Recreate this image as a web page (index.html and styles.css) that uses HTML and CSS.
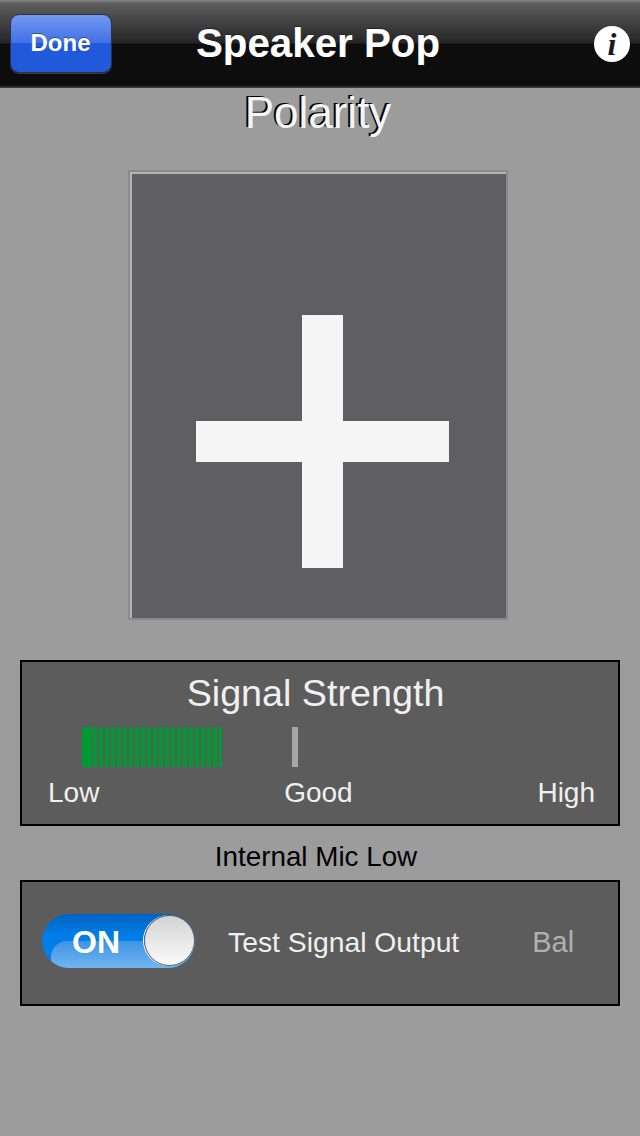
FILE: index.html
```html
<!DOCTYPE html>
<html lang="en">
<head>
    <meta charset="UTF-8">
    <meta name="viewport" content="width=device-width, initial-scale=1.0">
    <title>Speaker Pop</title>
    <link rel="stylesheet" href="styles.css">
</head>
<body>
    <header class="navbar">
        <button class="done-button">Done</button>
        <h1 class="navbar-title">Speaker Pop</h1>
        <span class="info-icon">i</span>
    </header>

    <h2 class="polarity-title">Polarity</h2>

    <div class="polarity-box">
        <div class="plus-sign"></div>
    </div>

    <section class="panel signal-panel">
        <h3 class="signal-title">Signal Strength</h3>
        <div class="meter">
            <div class="meter-first"></div>
            <div class="meter-bars"></div>
            <div class="meter-mark"></div>
        </div>
        <div class="meter-labels">
            <span>Low</span>
            <span>Good</span>
            <span>High</span>
        </div>
    </section>

    <p class="mic-status">Internal Mic Low</p>

    <section class="panel output-panel">
        <div class="switch">
            <span class="switch-label">ON</span>
            <span class="switch-knob"></span>
        </div>
        <span class="output-label">Test Signal Output</span>
        <span class="output-mode">Bal</span>
    </section>
</body>
</html>
```

FILE: styles.css
```css
body {
    margin: 0;
    height: 1136px;
    overflow: hidden;
    background-color: #9c9c9c;
    font-family: "Liberation Sans", Arial, sans-serif;
}

.navbar {
    height: 88px;
    display: grid;
    grid-template-columns: 1fr auto 1fr;
    align-items: center;
    padding: 0 10px;
    box-sizing: border-box;
    background: linear-gradient(#8a8a8a 0, #5e5e5e 3px, #252525 43px, #0d0d0d 44px, #0d0d0d 85px, #444 88px);
}
.done-button {
    width: 102px;
    height: 59px;
    margin-top: -2px;
    padding: 0 1px 0 0;
    border: 1px solid #2b3140;
    border-radius: 9px;
    background: linear-gradient(#7499f2 0, #3f6fe6 50%, #2159dc 50%, #2159da 100%);
    box-shadow: 0 1px 0 rgba(255, 255, 255, 0.2);
    color: white;
    font-family: inherit;
    font-size: 24px;
    font-weight: bold;
    text-shadow: 0 -1px 0 rgba(0, 0, 0, 0.4);
}
.navbar-title {
    margin: 0 0 0 -4px;
    color: white;
    font-size: 40.3px;
    font-weight: bold;
    text-shadow: 0 -1px 0 #222;
}
.info-icon {
    justify-self: end;
    width: 36px;
    height: 36px;
    border-radius: 50%;
    background-color: white;
    color: #1a1a1a;
    font-family: "Liberation Serif", serif;
    font-size: 32px;
    font-style: italic;
    font-weight: bold;
    line-height: 36px;
    text-align: center;
}

.polarity-title {
    margin: 0;
    height: 82px;
    padding-right: 4px;
    color: #f5f5f5;
    font-size: 44px;
    font-weight: normal;
    line-height: 50px;
    text-align: center;
    text-shadow: -2px -1px 0 #000;
}

.polarity-box {
    width: 380px;
    height: 450px;
    margin-left: 128px;
    box-sizing: border-box;
    padding: 143px 0 0 66px;
    border: 2px solid #8a8a8a;
    box-shadow: inset 2px 2px 0 #b4b4b4;
    background-color: #5f5f61;
}
.plus-sign {
    width: 253px;
    height: 253px;
    background:
        linear-gradient(#f5f5f5, #f5f5f5) center / 41px 100% no-repeat,
        linear-gradient(#f5f5f5, #f5f5f5) center / 100% 41px no-repeat;
}

.panel {
    width: 600px;
    margin-left: 20px;
    box-sizing: border-box;
    border: 2px solid #000;
    background-color: #5c5c5c;
    color: #f0f0f0;
}

.signal-panel {
    height: 166px;
    margin-top: 40px;
}
.signal-title {
    margin: 0;
    padding-top: 11px;
    padding-right: 9px;
    font-size: 37.7px;
    font-weight: normal;
    line-height: 41px;
    text-align: center;
}
.meter {
    display: flex;
    height: 40px;
    margin-top: 13px;
    padding-left: 60px;
}
.meter-first {
    width: 10px;
    background-color: #009933;
}
.meter-bars {
    width: 129px;
    margin-left: 1px;
    background: repeating-linear-gradient(90deg, #009933 0, #009933 4px, transparent 4px, transparent 6px);
}
.meter-mark {
    width: 6px;
    margin-left: 70px;
    background-color: #a6a6a6;
}
.meter-labels {
    display: flex;
    justify-content: space-between;
    margin-top: 10px;
    padding: 0 23px 0 26px;
    font-size: 28px;
    line-height: 32px;
}

.mic-status {
    height: 54px;
    margin: 0;
    box-sizing: border-box;
    padding-top: 15px;
    padding-right: 8px;
    color: #000;
    font-size: 27.8px;
    line-height: 32px;
    text-align: center;
}

.output-panel {
    height: 126px;
    display: flex;
    align-items: center;
    padding-left: 20px;
}
.switch {
    position: relative;
    width: 153px;
    height: 54px;
    margin-top: -4px;
    border-radius: 27px;
    overflow: hidden;
    background: linear-gradient(#0063c4, #007de8 40%, #0080ee);
}
.switch::before {
    content: "";
    position: absolute;
    top: 27px;
    left: 9px;
    right: 0;
    bottom: 0;
    border-radius: 16px 0 0 0;
    background: linear-gradient(#3f93e6, #70b5f0);
}
.switch-label {
    position: relative;
    display: block;
    padding-left: 30px;
    color: white;
    font-size: 32px;
    font-weight: bold;
    line-height: 56px;
}
.switch-knob {
    position: absolute;
    top: 1px;
    right: 0;
    width: 49px;
    height: 49px;
    border: 1px solid #666;
    border-radius: 50%;
    box-shadow: -1px 0 0 #fff;
    background: linear-gradient(#d4d4d4, #fafafa);
}
.output-label {
    margin-top: -2px;
    margin-left: 33px;
    font-size: 28.3px;
}
.output-mode {
    margin-top: -2px;
    margin-left: 73px;
    color: #b0b0b0;
    font-size: 29px;
}
```
